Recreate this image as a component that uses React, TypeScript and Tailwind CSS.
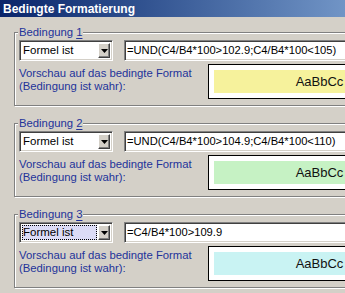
import React from "react";

type Cond = { n: string; formula: string; fill: string; focus?: boolean };

const conds: Cond[] = [
  { n: "1", formula: "=UND(C4/B4*100>102.9;C4/B4*100<105)", fill: "bg-[#f6f29c]" },
  { n: "2", formula: "=UND(C4/B4*100>104.9;C4/B4*100<110)", fill: "bg-[#c6f2c4]" },
  { n: "3", formula: "=C4/B4*100>109.9", fill: "bg-[#c9f3f3]", focus: true },
];

function Arrow() {
  return (
    <svg width="7" height="4" viewBox="0 0 7 4">
      <path d="M0 0h7L3.5 4z" fill="#000" />
    </svg>
  );
}

function Group({ c }: { c: Cond }) {
  return (
    <div className="relative ml-[14px] w-[440px] h-[74px] border border-[#808080] shadow-[inset_1px_1px_0_#fff,1px_1px_0_#fff] pt-[7px] pl-[4px]">
      <span className="absolute left-[3px] top-[-7px] px-[1px] bg-[#d4d0c8] text-[11.3px] leading-[13px] text-[#23339a]">
        Bedingung <span className="underline underline-offset-2">{c.n}</span>
      </span>
      <div className="flex gap-[11px] h-[21px]">
        <div className="flex w-[94px] h-[21px] bg-white border border-t-[#808080] border-l-[#808080] border-r-white border-b-white shadow-[inset_1px_1px_0_#404040,inset_-1px_-1px_0_#d4d0c8] p-[2px]">
          <div
            className={
              "flex-1 flex items-center pl-[1px] text-[11.5px] text-black " +
              (c.focus ? "bg-[#dcdcf6] outline outline-1 outline-dotted outline-black -outline-offset-1" : "")
            }
          >
            Formel ist
          </div>
          <div className="ml-[1px] w-[12px] flex items-center justify-center bg-[#d4d0c8] border border-t-white border-l-white border-r-[#404040] border-b-[#404040] shadow-[inset_-1px_-1px_0_#808080]">
            <Arrow />
          </div>
        </div>
        <div className="flex-1 flex items-center h-[21px] bg-white border border-t-[#808080] border-l-[#808080] border-r-white border-b-white shadow-[inset_1px_1px_0_#404040,inset_-1px_-1px_0_#d4d0c8] pl-[2px] text-[11.2px] text-black">
          {c.formula}
        </div>
      </div>
      <div className="flex mt-[3px]">
        <div className="w-[189px] mt-[3px] text-[11.3px] leading-[13px] text-[#23339a]">
          Vorschau auf das bedingte Format
          <br />
          (Bedingung ist wahr):
        </div>
        <div className="w-[223px] h-[35px] border border-black bg-white p-[5px]">
          <div className={"h-full flex items-center justify-center text-[13px] text-[#111] " + c.fill}>
            AaBbCc
          </div>
        </div>
      </div>
    </div>
  );
}

export default function App() {
  return (
    <div className="w-[345px] h-[293px] overflow-hidden bg-[#d4d0c8] font-['Liberation_Sans',Arial,sans-serif]">
      <div className="w-[500px]">
        <div className="h-[17px] flex items-center pl-[3px] bg-gradient-to-r from-[#0a246a] to-[#a6caf0] text-white font-bold text-[12px]">
          Bedingte Formatierung
        </div>
        <div className="flex flex-col gap-[17px] pt-[15px]">
          {conds.map((c) => (
            <Group key={c.n} c={c} />
          ))}
        </div>
      </div>
    </div>
  );
}
